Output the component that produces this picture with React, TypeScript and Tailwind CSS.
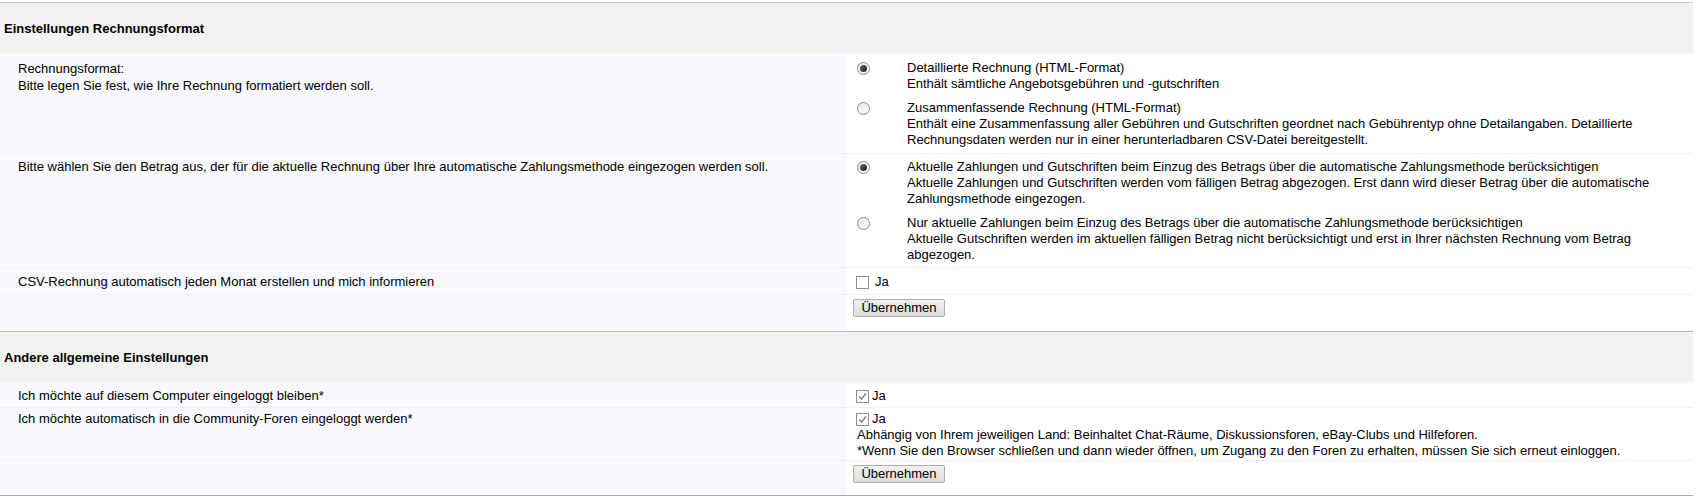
import React from "react";

function Radio({ checked }: { checked?: boolean }) {
  return (
    <span className="flex h-[13px] w-[13px] shrink-0 items-center justify-center rounded-full border border-[#8c8c8c] bg-gradient-to-br from-[#e6e6e6] to-white">
      {checked && (
        <span className="h-[7px] w-[7px] rounded-full bg-gradient-to-br from-[#6a6a6a] to-[#1c1c1c]" />
      )}
    </span>
  );
}

function Checkbox({ checked }: { checked?: boolean }) {
  return (
    <span className="flex h-[13px] w-[13px] shrink-0 items-center justify-center border border-[#8f8f8f] bg-white">
      {checked && (
        <svg width="11" height="11" viewBox="0 0 11 11">
          <polyline
            points="2,5.5 4.5,8 9,2.5"
            fill="none"
            stroke="#7a7a7a"
            strokeWidth="1.3"
          />
        </svg>
      )}
    </span>
  );
}

function Button() {
  return (
    <button className="h-[18px] w-[92px] rounded-[2px] border border-[#adadad] bg-gradient-to-b from-[#f0f0f0] to-[#dcdcdc] text-[13px] leading-[16px] text-black">
      Übernehmen
    </button>
  );
}

function Header({ title, top }: { title: string; top: string }) {
  return (
    <div className={`flex h-[53px] items-center border-t border-b-2 border-b-[#fafafa] bg-[#f2f2f2] pl-[4px] pt-[1px] ${top}`}>
      <span className="text-[13px] font-bold">{title}</span>
    </div>
  );
}

function Row({
  left,
  children,
  cls = "",
  last = false,
}: {
  left?: React.ReactNode;
  children: React.ReactNode;
  cls?: string;
  last?: boolean;
}) {
  return (
    <div className={`grid grid-cols-[846px_1fr] ${last ? "" : "border-b border-[#efeff4]"}`}>
      <div className={`bg-[#f8f8fd] pl-[18px] ${cls}`}>{left}</div>
      <div className={`bg-white pl-[10px] ${cls}`}>{children}</div>
    </div>
  );
}

function Option({
  checked,
  lines,
  cls = "",
}: {
  checked?: boolean;
  lines: string[];
  cls?: string;
}) {
  return (
    <div className={`flex ${cls}`}>
      <div className="flex h-[16px] w-[51px] items-center pl-[1px]">
        <Radio checked={checked} />
      </div>
      <div className="whitespace-nowrap">
        {lines.map((l, i) => (
          <div key={i}>{l}</div>
        ))}
      </div>
    </div>
  );
}

export default function App() {
  return (
    <div
      className="w-[1693px] bg-white pt-[2px] text-[13px] leading-[16px] text-black"
      style={{ fontFamily: '"Liberation Sans", Arial, sans-serif' }}
    >
      <Header title="Einstellungen Rechnungsformat" top="border-t-[#c6c6d6]" />

      <Row
        cls="pt-[5px] pb-[5px]"
        left={
          <div className="leading-[17px]">
            Rechnungsformat:
            <br />
            Bitte legen Sie fest, wie Ihre Rechnung formatiert werden soll.
          </div>
        }
      >
        <Option
          checked
          lines={[
            "Detaillierte Rechnung (HTML-Format)",
            "Enthält sämtliche Angebotsgebühren und -gutschriften",
          ]}
        />
        <Option
          cls="mt-[8px]"
          lines={[
            "Zusammenfassende Rechnung (HTML-Format)",
            "Enthält eine Zusammenfassung aller Gebühren und Gutschriften geordnet nach Gebührentyp ohne Detailangaben. Detaillierte",
            "Rechnungsdaten werden nur in einer herunterladbaren CSV-Datei bereitgestellt.",
          ]}
        />
      </Row>

      <Row
        cls="pt-[5px] pb-[4px]"
        left="Bitte wählen Sie den Betrag aus, der für die aktuelle Rechnung über Ihre automatische Zahlungsmethode eingezogen werden soll."
      >
        <Option
          checked
          lines={[
            "Aktuelle Zahlungen und Gutschriften beim Einzug des Betrags über die automatische Zahlungsmethode berücksichtigen",
            "Aktuelle Zahlungen und Gutschriften werden vom fälligen Betrag abgezogen. Erst dann wird dieser Betrag über die automatische",
            "Zahlungsmethode eingezogen.",
          ]}
        />
        <Option
          cls="mt-[8px]"
          lines={[
            "Nur aktuelle Zahlungen beim Einzug des Betrags über die automatische Zahlungsmethode berücksichtigen",
            "Aktuelle Gutschriften werden im aktuellen fälligen Betrag nicht berücksichtigt und erst in Ihrer nächsten Rechnung vom Betrag",
            "abgezogen.",
          ]}
        />
      </Row>

      <Row
        cls="pt-[6px] pb-[4px]"
        left="CSV-Rechnung automatisch jeden Monat erstellen und mich informieren"
      >
        <div className="flex h-[16px] items-center gap-[6px]">
          <Checkbox />
          <span>Ja</span>
        </div>
      </Row>

      <Row cls="pt-[4px] pb-[14px]" last>
        <div className="-ml-[3px]">
          <Button />
        </div>
      </Row>

      <Header title="Andere allgemeine Einstellungen" top="border-t-[#b9b9b9]" />

      <Row
        cls="pt-[4px] pb-[3px]"
        left="Ich möchte auf diesem Computer eingeloggt bleiben*"
      >
        <div className="flex h-[16px] items-center gap-[3px]">
          <Checkbox checked />
          <span>Ja</span>
        </div>
      </Row>

      <Row
        cls="pt-[3px] pb-[1px]"
        left="Ich möchte automatisch in die Community-Foren eingeloggt werden*"
      >
        <div className="flex h-[16px] items-center gap-[3px]">
          <Checkbox checked />
          <span>Ja</span>
        </div>
        <div className="whitespace-nowrap pl-[1px]">
          Abhängig von Ihrem jeweiligen Land: Beinhaltet Chat-Räume, Diskussionsforen, eBay-Clubs und Hilfeforen.
        </div>
        <div className="whitespace-nowrap pl-[1px]">
          *Wenn Sie den Browser schließen und dann wieder öffnen, um Zugang zu den Foren zu erhalten, müssen Sie sich erneut einloggen.
        </div>
      </Row>

      <Row cls="pt-[4px] pb-[12px]" last>
        <div className="-ml-[3px]">
          <Button />
        </div>
      </Row>
      <div className="h-px bg-[#a9a9a9]" />
    </div>
  );
}
